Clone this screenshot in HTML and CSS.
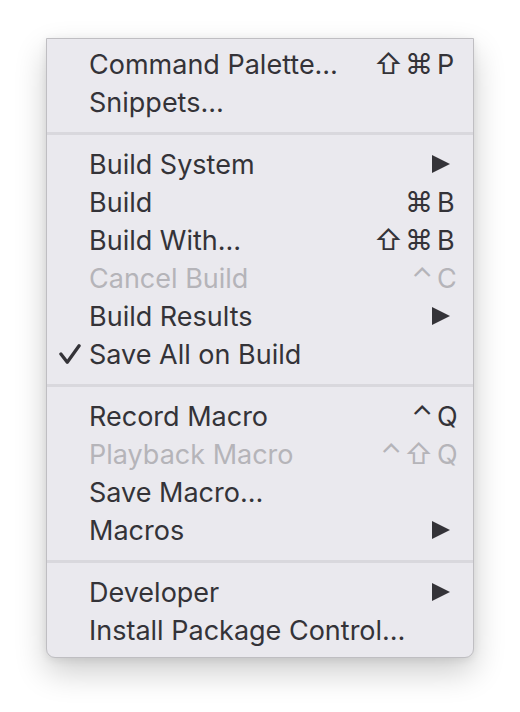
FILE: index.html
```html
<!DOCTYPE html>
<html>
<head>
<meta charset="utf-8">
<link rel="stylesheet" href="styles.css">
</head>
<body>
<div class="menu">
  <div class="item"><span class="label">Command Palette…</span><span class="sc"><span class="mods">⇧⌘</span><span class="key">P</span></span></div>
  <div class="item"><span class="label">Snippets…</span></div>
  <div class="sep"></div>
  <div class="item"><span class="label">Build System</span><svg class="arrow" viewBox="0 0 18 18"><polygon points="0,0 18,9 0,18"/></svg></div>
  <div class="item"><span class="label">Build</span><span class="sc"><span class="mods">⌘</span><span class="key">B</span></span></div>
  <div class="item"><span class="label">Build With…</span><span class="sc"><span class="mods">⇧⌘</span><span class="key">B</span></span></div>
  <div class="item disabled"><span class="label">Cancel Build</span><span class="sc"><span class="mods">⌃</span><span class="key">C</span></span></div>
  <div class="item"><span class="label">Build Results</span><svg class="arrow" viewBox="0 0 18 18"><polygon points="0,0 18,9 0,18"/></svg></div>
  <div class="item"><svg class="check" viewBox="0 0 24 22"><path d="M2 11 L9 20 L22 2"/></svg><span class="label">Save All on Build</span></div>
  <div class="sep"></div>
  <div class="item"><span class="label">Record Macro</span><span class="sc"><span class="mods">⌃</span><span class="key">Q</span></span></div>
  <div class="item disabled"><span class="label">Playback Macro</span><span class="sc"><span class="mods">⌃⇧</span><span class="key">Q</span></span></div>
  <div class="item"><span class="label">Save Macro…</span></div>
  <div class="item"><span class="label">Macros</span><svg class="arrow" viewBox="0 0 18 18"><polygon points="0,0 18,9 0,18"/></svg></div>
  <div class="sep"></div>
  <div class="item"><span class="label">Developer</span><svg class="arrow" viewBox="0 0 18 18"><polygon points="0,0 18,9 0,18"/></svg></div>
  <div class="item"><span class="label">Install Package Control…</span></div>
</div>
</body>
</html>
```

FILE: styles.css
```css
html, body {
  margin: 0;
  padding: 0;
  background: #ffffff;
}
body {
  box-sizing: border-box;
  min-height: 712px;
  padding: 38px 0 0 46px;
  font-family: "Inter", "Noto Sans", sans-serif;
}
.menu {
  box-sizing: border-box;
  width: 428px;
  height: 620px;
  background: #eae9ee;
  border: 1px solid #bfbec2;
  border-radius: 0 0 9px 9px;
  box-shadow: 0 14px 32px rgba(0, 0, 0, 0.2), 0 2px 8px rgba(0, 0, 0, 0.08);
  padding: 6px 0 0 0;
  display: flex;
  flex-direction: column;
}
.item {
  position: relative;
  height: 38px;
  display: flex;
  align-items: center;
  padding: 0 16px 0 42px;
  font-size: 27px;
  color: #343338;
}
.item.disabled {
  color: #b5b4b9;
}
.label {
  flex: 1;
  white-space: nowrap;
}
.sc {
  display: flex;
  align-items: center;
}
.mods {
  text-align: right;
  letter-spacing: 2px;
  font-size: 28px;
}
.key {
  width: 20px;
  margin-left: 2px;
  text-align: left;
}
.arrow {
  width: 18px;
  height: 18px;
  margin-right: 7px;
  fill: #343338;
}
.check {
  position: absolute;
  left: 12px;
  top: 9px;
  width: 22px;
  height: 20px;
  fill: none;
  stroke: #343338;
  stroke-width: 3.6;
  stroke-linecap: round;
  stroke-linejoin: round;
}
.sep {
  height: 3px;
  background: #d9d8dd;
  margin: 11px 0 10px 0;
}
```
